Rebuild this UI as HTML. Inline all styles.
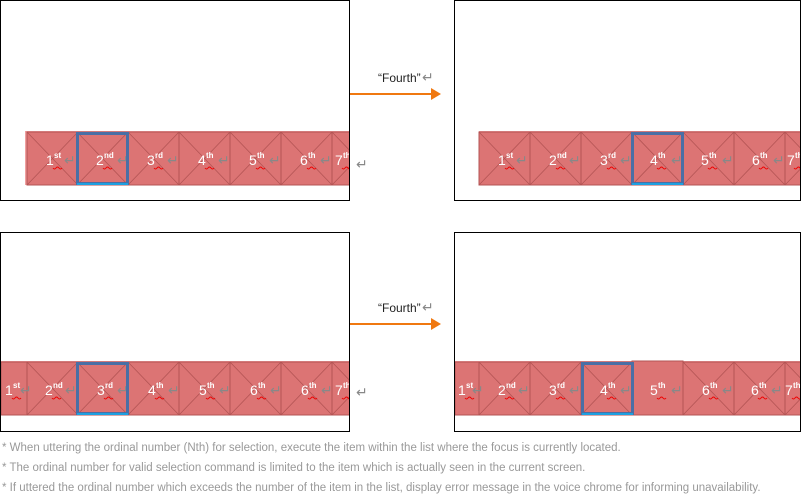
<!DOCTYPE html>
<html><head><meta charset="utf-8"><style>
html,body{margin:0;padding:0;background:#fff;width:805px;height:495px;overflow:hidden}
svg{display:block;font-family:"Liberation Sans",sans-serif}
.n{fill:#fff;font-size:14px}
.s{fill:#fff;font-size:8px;font-weight:bold}
.r{fill:#888;font-size:14px}
.f{fill:#999;font-size:11.5px}
</style></head><body>
<svg width="805" height="495" viewBox="0 0 805 495">
<defs>
<g id="c"><rect x="0" y="0" width="51" height="53" fill="#dc7474" stroke="#b35454" stroke-width="1"/><path d="M0 0L51 53M51 0L0 53" stroke="#b35454" stroke-width="0.8"/></g>
<g id="w"><path d="M0 0q1.5 2 3 0t3 0t3 0" stroke="#e00" fill="none" stroke-width="1"/></g>
</defs>
<rect x="0.5" y="0.5" width="349" height="200" fill="none" stroke="#000"/>
<rect x="454.5" y="0.5" width="346" height="200" fill="none" stroke="#000"/>
<rect x="0.5" y="232.5" width="349" height="199" fill="none" stroke="#000"/>
<rect x="454.5" y="232.5" width="346" height="199" fill="none" stroke="#000"/>

<!-- panel 1 -->
<svg x="0" y="0" width="349" height="200">
<rect x="25" y="131" width="3" height="54" fill="#f0a0a0"/>
<rect x="27" y="131" width="322" height="2" fill="#f0a0a0"/>
<use href="#c" x="27" y="132"/><use href="#c" x="77" y="132"/><use href="#c" x="128" y="132"/><use href="#c" x="179" y="132"/><use href="#c" x="230" y="132"/><use href="#c" x="281" y="132"/><use href="#c" x="332" y="132"/>
<g transform="translate(0,165)">
<text class="n" x="46">1</text><text class="s" x="54" y="-7">st</text><use href="#w" x="53" y="3"/><text class="r" x="64">↵</text>
<text class="n" x="96">2</text><text class="s" x="104" y="-7">nd</text><use href="#w" x="103" y="3"/><text class="r" x="117">↵</text>
<text class="n" x="147">3</text><text class="s" x="155" y="-7">rd</text><use href="#w" x="154" y="3"/><text class="r" x="167">↵</text>
<text class="n" x="198">4</text><text class="s" x="206" y="-7">th</text><use href="#w" x="205" y="3"/><text class="r" x="218">↵</text>
<text class="n" x="249">5</text><text class="s" x="257" y="-7">th</text><use href="#w" x="256" y="3"/><text class="r" x="269">↵</text>
<text class="n" x="300">6</text><text class="s" x="308" y="-7">th</text><use href="#w" x="307" y="3"/><text class="r" x="320">↵</text>
<text class="n" x="335">7</text><text class="s" x="343" y="-7">th</text><use href="#w" x="342" y="3"/>
</g>
</svg>
<text class="r" x="356" y="169">↵</text>
<rect x="77.5" y="133.5" width="50" height="50" fill="none" stroke="#4a6fa5" stroke-width="3"/>
<rect x="77" y="183" width="51" height="2" fill="#1ea0e0"/>

<text x="378" y="82" font-size="12" fill="#222">“Fourth”</text><text class="r" x="422" y="82">↵</text>
<path d="M350 94H434" stroke="#f07810" stroke-width="2"/><path d="M431 88L441 94L431 100Z" fill="#f07810"/>

<!-- panel 2 -->
<svg x="455" y="0" width="345" height="200">
<rect x="24" y="131" width="321" height="2" fill="#f0a0a0"/>
<use href="#c" x="24" y="132"/><use href="#c" x="75" y="132"/><use href="#c" x="126" y="132"/><use href="#c" x="177" y="132"/><use href="#c" x="228" y="132"/><use href="#c" x="279" y="132"/><use href="#c" x="330" y="132"/>
<g transform="translate(0,165)">
<text class="n" x="43">1</text><text class="s" x="51" y="-7">st</text><use href="#w" x="50" y="3"/><text class="r" x="61">↵</text>
<text class="n" x="94">2</text><text class="s" x="102" y="-7">nd</text><use href="#w" x="101" y="3"/><text class="r" x="114">↵</text>
<text class="n" x="145">3</text><text class="s" x="153" y="-7">rd</text><use href="#w" x="152" y="3"/><text class="r" x="165">↵</text>
<text class="n" x="195">4</text><text class="s" x="203" y="-7">th</text><use href="#w" x="202" y="3"/><text class="r" x="216">↵</text>
<text class="n" x="246">5</text><text class="s" x="254" y="-7">th</text><use href="#w" x="253" y="3"/><text class="r" x="267">↵</text>
<text class="n" x="297">6</text><text class="s" x="305" y="-7">th</text><use href="#w" x="304" y="3"/><text class="r" x="318">↵</text>
<text class="n" x="332">7</text><text class="s" x="340" y="-7">th</text><use href="#w" x="339" y="3"/>
</g>
</svg>
<rect x="632.5" y="133.5" width="50" height="50" fill="none" stroke="#4a6fa5" stroke-width="3"/>
<rect x="632" y="183" width="51" height="2" fill="#1ea0e0"/>

<!-- panel 3 -->
<svg x="1" y="232" width="348" height="199">
<rect x="0" y="129" width="348" height="2" fill="#f0a0a0"/>
<rect x="0" y="130" width="26" height="53" fill="#dc7474" stroke="#b35454"/>
<use href="#c" x="26" y="130"/><use href="#c" x="76" y="130"/><use href="#c" x="127" y="130"/><use href="#c" x="178" y="130"/><use href="#c" x="229" y="130"/><use href="#c" x="280" y="130"/><use href="#c" x="331" y="130"/>
<g transform="translate(0,163)">
<text class="n" x="4">1</text><text class="s" x="12" y="-7">st</text><use href="#w" x="11" y="3"/><text class="r" x="19">↵</text>
<text class="n" x="44">2</text><text class="s" x="52" y="-7">nd</text><use href="#w" x="51" y="3"/><text class="r" x="64">↵</text>
<text class="n" x="96">3</text><text class="s" x="104" y="-7">rd</text><use href="#w" x="103" y="3"/><text class="r" x="116">↵</text>
<text class="n" x="147">4</text><text class="s" x="155" y="-7">th</text><use href="#w" x="154" y="3"/><text class="r" x="167">↵</text>
<text class="n" x="198">5</text><text class="s" x="206" y="-7">th</text><use href="#w" x="205" y="3"/><text class="r" x="218">↵</text>
<text class="n" x="249">6</text><text class="s" x="257" y="-7">th</text><use href="#w" x="256" y="3"/><text class="r" x="269">↵</text>
<text class="n" x="300">6</text><text class="s" x="308" y="-7">th</text><use href="#w" x="307" y="3"/><text class="r" x="320">↵</text>
<text class="n" x="334">7</text><text class="s" x="342" y="-7">th</text><use href="#w" x="341" y="3"/>
</g>
</svg>
<text class="r" x="356" y="397">↵</text>
<rect x="77.5" y="363.5" width="50" height="50" fill="none" stroke="#4a6fa5" stroke-width="3"/>
<rect x="77" y="413" width="51" height="2" fill="#1ea0e0"/>

<text x="378" y="312" font-size="12" fill="#222">“Fourth”</text><text class="r" x="422" y="312">↵</text>
<path d="M350 324H434" stroke="#f07810" stroke-width="2"/><path d="M431 318L441 324L431 330Z" fill="#f07810"/>

<!-- panel 4 -->
<svg x="455" y="232" width="345" height="199">
<rect x="0" y="129" width="345" height="2" fill="#f0a0a0"/>
<rect x="0" y="130" width="24" height="53" fill="#dc7474" stroke="#b35454"/>
<use href="#c" x="24" y="130"/><use href="#c" x="75" y="130"/><use href="#c" x="126" y="130"/><use href="#c" x="228" y="130"/><use href="#c" x="279" y="130"/><use href="#c" x="330" y="130"/>
<rect x="177" y="129" width="51" height="54" fill="#dc7474" stroke="#b35454"/>
<g transform="translate(0,163)">
<text class="n" x="3">1</text><text class="s" x="11" y="-7">st</text><use href="#w" x="10" y="3"/><text class="r" x="17">↵</text>
<text class="n" x="43">2</text><text class="s" x="51" y="-7">nd</text><use href="#w" x="50" y="3"/><text class="r" x="63">↵</text>
<text class="n" x="94">3</text><text class="s" x="102" y="-7">rd</text><use href="#w" x="101" y="3"/><text class="r" x="114">↵</text>
<text class="n" x="145">4</text><text class="s" x="153" y="-7">th</text><use href="#w" x="152" y="3"/><text class="r" x="165">↵</text>
<text class="n" x="195">5</text><text class="s" x="203" y="-7">th</text><use href="#w" x="202" y="3"/><text class="r" x="216">↵</text>
<text class="n" x="247">6</text><text class="s" x="255" y="-7">th</text><use href="#w" x="254" y="3"/><text class="r" x="267">↵</text>
<text class="n" x="296">6</text><text class="s" x="304" y="-7">th</text><use href="#w" x="303" y="3"/><text class="r" x="316">↵</text>
<text class="n" x="330">7</text><text class="s" x="338" y="-7">th</text><use href="#w" x="337" y="3"/>
</g>
</svg>
<rect x="582.5" y="363.5" width="50" height="50" fill="none" stroke="#4a6fa5" stroke-width="3"/>
<rect x="582" y="413" width="51" height="2" fill="#1ea0e0"/>

<text class="f" x="2" y="451">* When uttering the ordinal number (Nth) for selection, execute the item within the list where the focus is currently located.</text>
<text class="f" x="2" y="471">* The ordinal number for valid selection command is limited to the item which is actually seen in the current screen.</text>
<text class="f" x="2" y="491">* If uttered the ordinal number which exceeds the number of the item in the list, display error message in the voice chrome for informing unavailability.</text>
</svg>
</body></html>
